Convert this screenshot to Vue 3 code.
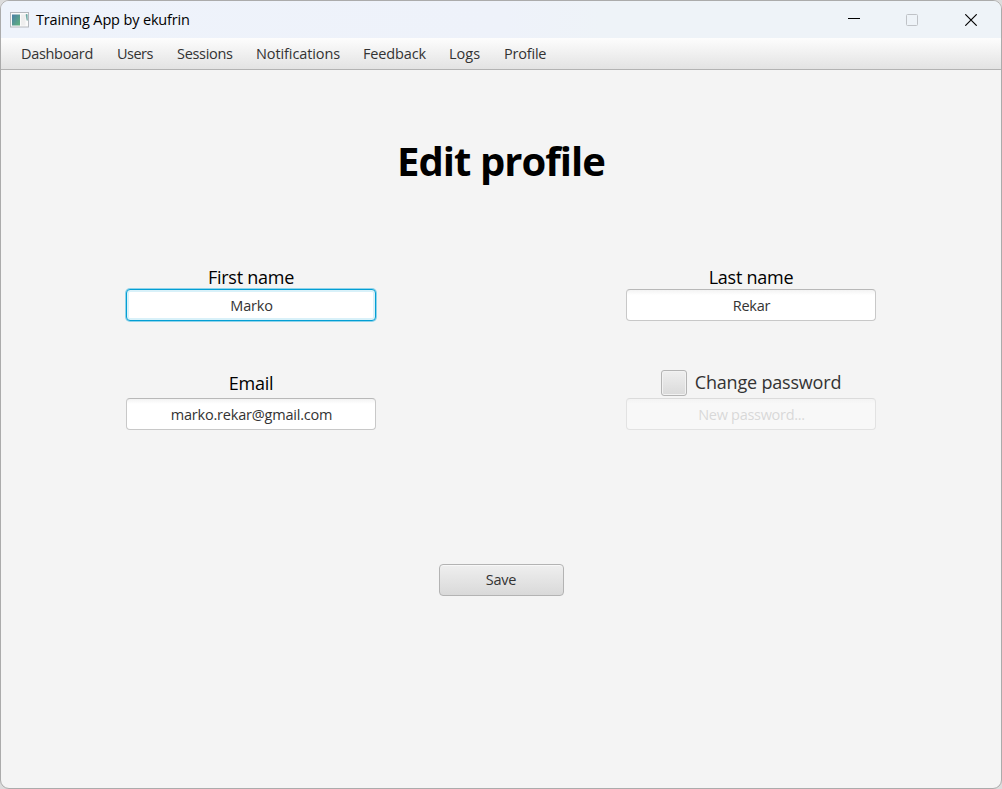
<!--
  Edit profile window: title bar, menu bar and the profile form.
-->
<script setup>
import { ref } from 'vue'

// width and tracking are in px
const menuItems = [
  { label: 'Dashboard', width: 72, tracking: -0.32 },
  { label: 'Users', width: 36, tracking: -0.5 },
  { label: 'Sessions', width: 55, tracking: -0.3 },
  { label: 'Notifications', width: 83, tracking: -0.1 },
  { label: 'Feedback', width: 62, tracking: -0.14 },
  { label: 'Logs', width: 31, tracking: 0 },
  { label: 'Profile', width: 42, tracking: -0.2 },
]

const firstName = ref('Marko')
const lastName = ref('Rekar')
const email = ref('marko.rekar@gmail.com')
const password = ref('')
const changePassword = ref(false)
</script>

<template>
  <div class="window">
    <header class="titlebar">
      <svg class="app-icon" width="19" height="16" viewBox="0 0 19 16">
        <defs>
          <linearGradient id="iconFill" x1="0" y1="0" x2="1" y2="1">
            <stop offset="0" stop-color="#4a7ea8" />
            <stop offset="1" stop-color="#5fb37c" />
          </linearGradient>
        </defs>
        <rect x="0.5" y="0.5" width="18" height="14.5" fill="#fbfbfb" stroke="#b4b8bd" />
        <rect x="2" y="2.5" width="8" height="11" fill="url(#iconFill)" />
        <rect x="11" y="2.5" width="4.5" height="11" fill="#eeeeee" />
        <path d="M16 2.5h1.2v6z" fill="#5b9d98" stroke="#5b9d98" stroke-width="0.6" />
      </svg>
      <span class="titlebar-text">Training App by ekufrin</span>
      <div class="controls">
        <svg width="12" height="12" viewBox="0 0 12 12">
          <path d="M0 4.5h12" stroke="#000000" />
        </svg>
        <svg width="12" height="12" viewBox="0 0 12 12">
          <rect x="0.5" y="0.5" width="11" height="11" rx="1" fill="none" stroke="#bfc2c7" />
        </svg>
        <svg width="12" height="12" viewBox="0 0 12 12">
          <path d="M0.3 0.3l11.4 11.4M11.7 0.3L0.3 11.7" stroke="#000000" stroke-width="1.15" />
        </svg>
      </div>
    </header>

    <nav class="menubar">
      <span
        v-for="item in menuItems"
        :key="item.label"
        class="menu-item"
        :style="{ width: `${item.width}px`, letterSpacing: `${item.tracking}px` }"
      >{{ item.label }}</span>
    </nav>

    <main class="content">
      <h1 class="title">Edit profile</h1>

      <form class="form" @submit.prevent>
        <div class="grid">
          <div class="field">
            <label class="label">First name</label>
            <input v-model="firstName" class="input input--focused" type="text" />
          </div>
          <div class="field">
            <label class="label">Last name</label>
            <input v-model="lastName" class="input" type="text" />
          </div>
          <div class="field">
            <label class="label label--tall">Email</label>
            <input v-model="email" class="input" type="text" />
          </div>
          <div class="field">
            <label class="check">
              <input v-model="changePassword" class="check-box" type="checkbox" />
              <span class="check-text">Change password</span>
            </label>
            <input
              v-model="password"
              class="input input--password"
              type="password"
              placeholder="New password..."
              :disabled="!changePassword"
            />
          </div>
        </div>
        <button class="save" type="submit">Save</button>
      </form>
    </main>
  </div>
</template>

<style>
body {
  background: #dcdcdc;
}
</style>

<style scoped>
.window {
  box-sizing: border-box;
  width: 1002px;
  height: 789px;
  display: flex;
  flex-direction: column;
  overflow: hidden;
  border: 1px solid #ababab;
  border-radius: 9px;
  background: #f4f4f4;
  color: #333333;
  font-family: 'Open Sans', 'Noto Sans', sans-serif;
  font-size: 14.5px;
}

.titlebar {
  display: flex;
  align-items: center;
  height: 37px;
  flex: none;
  padding: 0 24px 0 9px;
  background: linear-gradient(90deg, #eef3fb, #eef2fa 50%, #eef3f8 60%);
}

.app-icon {
  margin-right: 7px;
}

.titlebar-text {
  color: #000000;
  line-height: 20px;
  letter-spacing: -0.15px;
  white-space: nowrap;
}

.controls {
  display: flex;
  gap: 47px;
  margin-left: auto;
}

.controls svg:first-child {
  margin-right: -1px;
}

.menubar {
  box-sizing: border-box;
  display: flex;
  align-items: center;
  gap: 24px;
  flex: none;
  height: 32px;
  padding: 0 20px;
  border-bottom: 1px solid #b3b3b3;
  background: linear-gradient(#fdfdfd, #e3e3e3);
}

.menu-item {
  line-height: 20px;
  white-space: nowrap;
}

.content {
  display: flex;
  flex-direction: column;
  align-items: center;
}

.title {
  margin: 63px 0 0;
  color: #000000;
  font-size: 40px;
  font-weight: 700;
  line-height: 56px;
  letter-spacing: -0.95px;
  white-space: nowrap;
}

.form {
  display: flex;
  flex-direction: column;
  align-items: center;
  margin-top: 77px;
}

.grid {
  display: grid;
  grid-template-columns: 250px 250px;
  column-gap: 250px;
  row-gap: 49px;
}

.field {
  display: flex;
  flex-direction: column;
  align-items: center;
}

.label {
  height: 23px;
  color: #000000;
  font-size: 18px;
  line-height: 22px;
  letter-spacing: -0.25px;
}

.label--tall {
  height: 28px;
  line-height: 26px;
}

.input {
  box-sizing: border-box;
  width: 250px;
  height: 32px;
  padding: 0 8px 0 9px;
  border: 1px solid #c8c8c8;
  border-top-color: #b8b8b8;
  border-radius: 4px;
  outline: none;
  background: linear-gradient(#f3f3f3, #ffffff 5px);
  color: #333333;
  font: inherit;
  letter-spacing: -0.2px;
  text-align: center;
}

.input--focused {
  border-color: #039ed3;
  background: #ffffff;
  box-shadow: 0 0 0 1px #8fd3ea, inset 0 0 0 2px #d9f1f9;
}

.input--password {
  letter-spacing: -0.3px;
}

.input:disabled {
  opacity: 0.4;
}

.input::placeholder {
  color: #b0b0b0;
  opacity: 1;
}

.check {
  display: flex;
  align-items: center;
  height: 28px;
  font-size: 18px;
}

.check-box {
  appearance: none;
  box-sizing: border-box;
  width: 26px;
  height: 26px;
  margin: 0 8px 2px 0;
  border: 1px solid #b4b4b4;
  border-radius: 3px;
  background: linear-gradient(#efefef, #dadada);
  box-shadow: inset 0 0 0 1px #f2f2f2;
}

.check-text {
  margin-bottom: 4px;
  line-height: 24px;
  letter-spacing: -0.19px;
  white-space: nowrap;
}

.save {
  width: 125px;
  height: 32px;
  margin-top: 134px;
  padding: 0 0 2px;
  border: 1px solid #b3b3b3;
  border-radius: 4px;
  background: linear-gradient(#efefef, #d9d9d9);
  box-shadow: inset 0 1px 0 #f8f8f8;
  color: #333333;
  font: inherit;
  letter-spacing: -0.2px;
}
</style>
